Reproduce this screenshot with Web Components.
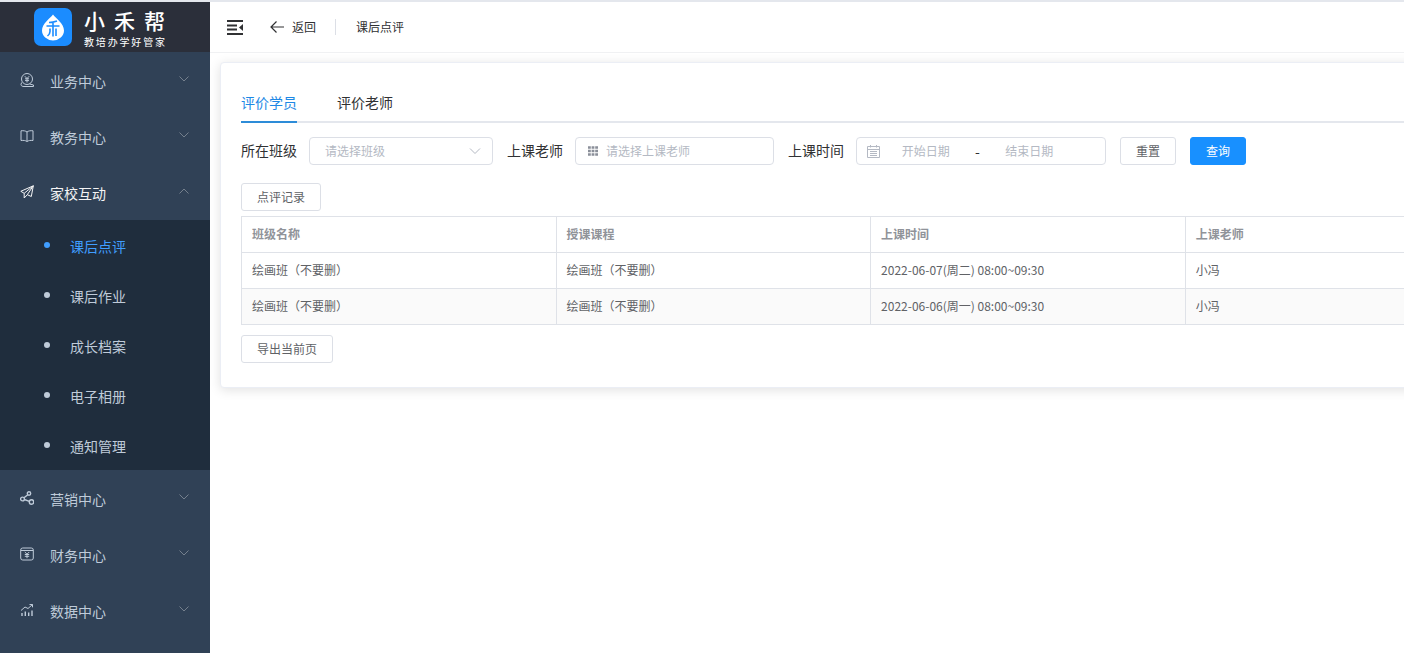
<!DOCTYPE html>
<html lang="zh-CN">
<head>
<meta charset="utf-8">
<meta name="viewport" content="width=device-width, initial-scale=1">
<title>课后点评</title>
<style>
  html, body { height: 100%; }
  body {
    margin: 0;
    background: #fff;
    color: #303133;
    font: 14px/20px "Noto Sans CJK SC", sans-serif;
  }
</style>
</head>
<body>
<app-shell>
  <side-nav slot="nav">
    <brand-logo slot="brand"></brand-logo>
    <nav-group icon="service" label="业务中心"></nav-group>
    <nav-group icon="book" label="教务中心"></nav-group>
    <nav-group icon="plane" label="家校互动" open>
      <nav-item label="课后点评" active></nav-item>
      <nav-item label="课后作业"></nav-item>
      <nav-item label="成长档案"></nav-item>
      <nav-item label="电子相册"></nav-item>
      <nav-item label="通知管理"></nav-item>
    </nav-group>
    <nav-group icon="share" label="营销中心"></nav-group>
    <nav-group icon="money" label="财务中心"></nav-group>
    <nav-group icon="chart" label="数据中心"></nav-group>
  </side-nav>
  <top-bar slot="header">课后点评</top-bar>
  <content-card>
    <tab-strip></tab-strip>
    <filter-bar>
      <select-field label="所在班级" placeholder="请选择班级"></select-field>
      <text-field label="上课老师" placeholder="请选择上课老师"></text-field>
      <date-range label="上课时间"></date-range>
      <ui-button>重置</ui-button>
      <ui-button primary>查询</ui-button>
    </filter-bar>
    <ui-button class="records">点评记录</ui-button>
    <lesson-table></lesson-table>
    <ui-button>导出当前页</ui-button>
  </content-card>
</app-shell>

<script>
const ICONS = {
  service: '<circle cx="7" cy="6" r="5.5"/><path d="M4.800 3.200 7 5.500l2.200-2.300M7 5.500V9.500M5 5.800h4M5 7.600h4M1.600 9.500 1 11.500c0 1.500 1.500 2 3 2H13.500M9.500 11l4 1v1.500"/>',
  book: '<path d="M7 3C5.500 1.800 3.500 1.500 1 1.800v9.700c2.500-.3 4.500 0 6 1 1.500-1 3.500-1.300 6-1V1.800C10.500 1.500 8.500 1.800 7 3zM7 3v9.500"/>',
  plane: '<path d="M13.300.8.8 6.300l3.400 2L13.300.8 11.300 11.500 7.300 9.700 13.300.8M4.200 8.300V13l3.100-3.300"/>',
  share: '<g stroke-width="1.400"><circle cx="2.500" cy="8" r="1.900"/><circle cx="9" cy="2.500" r="1.700"/><circle cx="11.500" cy="11" r="2.200"/><path d="M4 6.800 7.800 3.800M4.300 8.500l5.100 1.800"/></g>',
  money: '<rect x=".7" y="1" width="12.600" height="12" rx="2"/><path d="M1 3.500h12M4.800 5 7 7.200 9.200 5M7 7.200v4M4.800 7.500h4.400M4.800 9.300h4.400"/>',
  chart: '<path d="M1 7.500 5 4l3 1.500 4.500-4M9.500 1.500h3v2.800"/><path stroke-width="1.400" d="M2 10v3M5.300 8.500V13M8.700 9.500V13M12 7.500V13"/>'
};

function define(name, html, setup) {
  const template = document.createElement('template');
  template.innerHTML = html;
  customElements.define(name, class extends HTMLElement {
    connectedCallback() {
      if (this.shadowRoot) return;
      const root = this.attachShadow({ mode: 'open' });
      root.append(template.content.cloneNode(true));
      if (setup) setup(this, root);
    }
  });
}

define('app-shell', `
  <style>
    :host { display: grid; grid-template-columns: 210px minmax(0, 1fr); min-height: 100%; box-sizing: border-box; border-top: 2px solid #e4e7ed; }
    main { min-width: 0; overflow: hidden; }
    .page { padding: 9px 0 20px 10px; }
  </style>
  <slot name="nav"></slot>
  <main><slot name="header"></slot><div class="page"><slot></slot></div></main>`);

define('side-nav', `
  <style>
    :host { display: block; background: #304156; }
    nav { display: flex; flex-direction: column; }
  </style>
  <slot name="brand"></slot>
  <nav aria-label="主菜单"><slot></slot></nav>`);

define('brand-logo', `
  <style>
    :host { display: flex; align-items: center; gap: 12px; height: 50px; padding-left: 34px; background: #2b2f3a; color: #fff; }
    svg { width: 38px; height: 38px; flex: none; }
    .words { width: 81px; }
    b, small { display: block; text-align-last: justify; }
    b { font-size: 21px; line-height: 30px; font-weight: 500; }
    small { font-size: 10px; line-height: 14px; }
  </style>
  <svg viewBox="0 0 38 38" aria-hidden="true">
    <rect width="38" height="38" rx="7" fill="#1b8cff"/>
    <path d="M19 6.500C21.500 10 30 15.500 30 22.500a11 10 0 0 1-22 0C8 15.500 16.500 10 19 6.500z" fill="#fff"/>
    <path d="M15 14.500q4 0 8-1.500M12.500 18h13M19 14V28.500M16 20.500v3q0 2.500-2.500 4.500M22 20.500v7.500" fill="none" stroke="#1b8cff" stroke-width="1.600"/>
  </svg>
  <div class="words"><b>小禾帮</b><small>教培办学好管家</small></div>`);

define('nav-group', `
  <style>
    :host { display: block; color: #bfcbd9; }
    :host([open]) { color: #f4f4f5; }
    button { display: flex; align-items: center; width: 100%; height: 56px; padding: 0 20px; border: 0; background: none; color: inherit; font: inherit; text-align: left; cursor: pointer; }
    svg { width: 14px; height: 14px; flex: none; fill: none; stroke: currentColor; stroke-linejoin: round; }
    .label { flex: 1; padding: 2px 0 0 16px; }
    .arrow { width: 12px; height: 12px; margin-bottom: 2px; color: #75808d; }
    :host([open]) .arrow { transform: rotate(180deg); }
    .sub { background: #1f2d3d; color: #bfcbd9; }
  </style>
  <button type="button"><svg class="icon" viewBox="0 0 14 14" aria-hidden="true"></svg><span class="label"></span>
  <svg class="arrow" viewBox="0 0 12 12" aria-hidden="true"><path d="M1.500 3.500 6 8l4.500-4.500"/></svg></button>
  <div class="sub"><slot></slot></div>`,
  (host, root) => {
    root.querySelector('.icon').innerHTML = ICONS[host.getAttribute('icon')];
    root.querySelector('.label').textContent = host.getAttribute('label');
    root.querySelector('button').setAttribute('aria-expanded', host.hasAttribute('open'));
  });

define('nav-item', `
  <style>
    :host { display: block; }
    a { display: flex; align-items: center; height: 50px; padding-left: 44px; color: inherit; text-decoration: none; }
    :host([active]) a { color: #409eff; }
    i { width: 6px; height: 6px; border-radius: 50%; background: currentColor; }
    span { padding: 2px 0 0 20px; }
  </style>
  <a href="#"><i></i><span></span></a>`,
  (host, root) => { root.querySelector('span').textContent = host.getAttribute('label'); });

define('top-bar', `
  <style>
    :host { display: flex; align-items: center; height: 50px; padding-left: 16px; border-bottom: 1px solid #f0f1f3; font-size: 12px; }
    button { display: flex; align-items: center; padding: 0; border: 0; background: none; color: inherit; font: inherit; cursor: pointer; }
    svg { display: block; fill: none; stroke: currentColor; }
    .back { gap: 8px; margin-left: 26px; }
    .rule { width: 1px; height: 16px; margin: 0 20px 0 19px; background: #dcdfe6; }
  </style>
  <button type="button" aria-label="收起菜单"><svg width="18" height="16" viewBox="0 0 18 16" stroke-width="2" aria-hidden="true"><path d="M1 2h16M1 6.500h10M1 10.500h10M1 15h16"/><path d="M17 5v7l-4-3.500z" fill="currentColor" stroke="none"/></svg></button>
  <button type="button" class="back"><svg width="14" height="14" viewBox="0 0 14 14" stroke-width="1.200" aria-hidden="true"><path d="M14 7H1M6.500 1.500 1 7l5.500 5.500"/></svg>返回</button>
  <span class="rule"></span><span><slot></slot></span>`);

define('content-card', `
  <style>
    :host { display: block; margin-right: -24px; padding: 20px 20px 24px; border: 1px solid #ebeef5; border-radius: 4px; background: #fff; box-shadow: 0 2px 12px rgba(0, 0, 0, .12); }
    ::slotted(.records) { margin: 18px 0 5px; }
    ::slotted(lesson-table) { margin-bottom: 10px; }
  </style>
  <slot></slot>`);

define('tab-strip', `
  <style>
    :host { display: flex; gap: 40px; box-shadow: inset 0 -2px #e4e7ed; }
    button { height: 40px; padding: 0; border: 0; border-bottom: 2px solid transparent; background: none; color: #303133; font: inherit; cursor: pointer; }
    button[aria-selected=true] { color: #1e88e5; border-color: #2d8cd8; }
  </style>
  <button type="button" role="tab" aria-selected="true">评价学员</button>
  <button type="button" role="tab" aria-selected="false">评价老师</button>`,
  host => host.setAttribute('role', 'tablist'));

define('filter-bar', `
  <style>:host { display: flex; flex-wrap: wrap; gap: 14px; margin-top: 14px; }</style>
  <slot></slot>`);

const FIELD_CSS = `
    :host { display: flex; align-items: center; gap: 12px; }
    label { padding-bottom: 2px; }
    .box { display: flex; align-items: center; box-sizing: border-box; height: 28px; border: 1px solid #dcdfe6; border-radius: 4px; background: #fff; }
    input, select { box-sizing: border-box; min-width: 0; height: 26px; padding: 0; border: 0; outline: 0; background: none; color: #606266; font: inherit; font-size: 12px; }
    input { padding-bottom: 2px; }
    ::placeholder { color: #b4b9c3; opacity: 1; }
    svg { flex: none; fill: none; stroke: #b4b9c3; }`;

define('select-field', `
  <style>${FIELD_CSS}
    .box { width: 184px; padding: 0 11px 0 15px; }
    select { flex: 1; appearance: none; color: #b4b9c3; }
  </style>
  <label for="control"></label>
  <div class="box"><select id="control"><option></option></select>
  <svg width="12" height="12" viewBox="0 0 12 12" aria-hidden="true"><path d="M1 3.500 6 8.500l5-5"/></svg></div>`,
  (host, root) => {
    root.querySelector('label').textContent = host.getAttribute('label');
    root.querySelector('option').textContent = host.getAttribute('placeholder');
  });

define('text-field', `
  <style>${FIELD_CSS}
    .box { width: 199px; padding-left: 12px; gap: 8px; }
    input { flex: 1; }
  </style>
  <label for="control"></label>
  <div class="box"><svg width="10" height="10" viewBox="0 0 10 10" aria-hidden="true"><path d="M0 1.500h10M0 5h10M0 8.500h10" stroke="#8a8f99" stroke-width="2.400" stroke-dasharray="2.800 .8"/></svg>
  <input id="control" type="text"></div>`,
  (host, root) => {
    root.querySelector('label').textContent = host.getAttribute('label');
    root.querySelector('input').placeholder = host.getAttribute('placeholder');
  });

define('date-range', `
  <style>${FIELD_CSS}
    .box { width: 250px; padding: 0 30px 0 10px; }
    input { flex: 1; text-align: center; }
    .dash { width: 12px; text-align: center; }
  </style>
  <label for="start"></label>
  <div class="box"><svg width="13" height="13" viewBox="0 0 13 13" aria-hidden="true"><path d="M.5 1.500h12v11H.5zM.5 4.500h12M3.500 0v2.500M9.500 0v2.500M3 6.500h7M3 8.500h7M3 10.500h7"/></svg>
  <input id="start" type="text" placeholder="开始日期"><span class="dash">-</span><input type="text" aria-label="结束日期" placeholder="结束日期"></div>`,
  (host, root) => { root.querySelector('label').textContent = host.getAttribute('label'); });

define('ui-button', `
  <style>
    :host { display: block; }
    button { display: block; box-sizing: border-box; height: 28px; padding: 0 15px; border: 1px solid #dcdfe6; border-radius: 3px; background: #fff; color: #606266; font: inherit; font-size: 12px; cursor: pointer; }
    :host([primary]) button { border-color: #1890ff; background: #1890ff; color: #fff; }
  </style>
  <button type="button"><slot></slot></button>`);

define('lesson-table', `
  <style>
    :host { display: block; }
    table { width: 100%; table-layout: fixed; border-collapse: collapse; color: #606266; font-size: 12px; line-height: 20px; }
    th, td { height: 33px; padding: 0 10px 2px; border: 1px solid #dfe2e8; text-align: left; }
    th { color: #909399; font-weight: 700; }
    tbody tr:nth-child(even) { background: #fafafa; }
    col { width: 27%; }
    col:last-child { width: auto; }
  </style>
  <table>
    <colgroup><col><col><col><col></colgroup>
    <thead><tr><th>班级名称</th><th>授课课程</th><th>上课时间</th><th>上课老师</th></tr></thead>
    <tbody>
      <tr><td>绘画班（不要删）</td><td>绘画班（不要删）</td><td>2022-06-07(周二) 08:00~09:30</td><td>小冯</td></tr>
      <tr><td>绘画班（不要删）</td><td>绘画班（不要删）</td><td>2022-06-06(周一) 08:00~09:30</td><td>小冯</td></tr>
    </tbody>
  </table>`);
</script>
</body>
</html>
